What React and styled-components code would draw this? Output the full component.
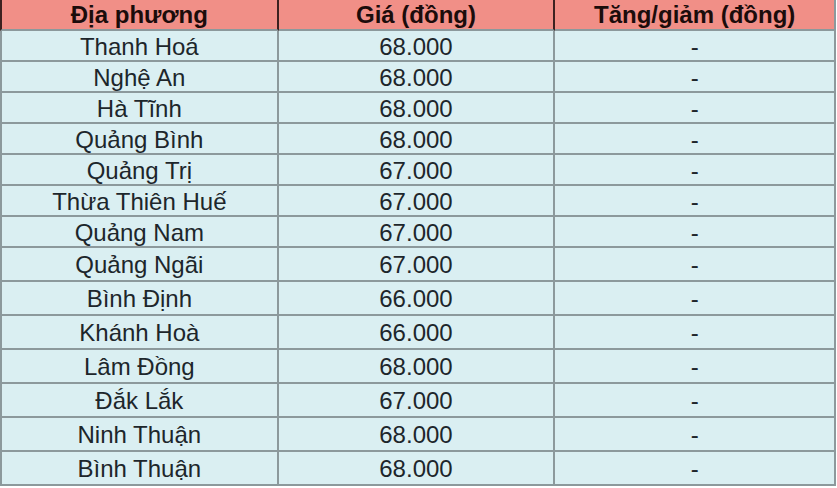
import styled, { createGlobalStyle } from 'styled-components'

const GlobalStyle = createGlobalStyle`
  html, body { margin: 0; padding: 0; background: #ffffff; }
  body { font-family: "Liberation Sans", Arial, sans-serif; }
`

const rows = [
  ['Thanh Hoá', '68.000', '-'],
  ['Nghệ An', '68.000', '-'],
  ['Hà Tĩnh', '68.000', '-'],
  ['Quảng Bình', '68.000', '-'],
  ['Quảng Trị', '67.000', '-'],
  ['Thừa Thiên Huế', '67.000', '-'],
  ['Quảng Nam', '67.000', '-'],
  ['Quảng Ngãi', '67.000', '-'],
  ['Bình Định', '66.000', '-'],
  ['Khánh Hoà', '66.000', '-'],
  ['Lâm Đồng', '68.000', '-'],
  ['Đắk Lắk', '67.000', '-'],
  ['Ninh Thuận', '68.000', '-'],
  ['Bình Thuận', '68.000', '-'],
]

const widths = [276, 274, 278]

export default function App() {
  return (
    <>
      <GlobalStyle />
      <PriceTable>
        <colgroup>
          {widths.map((w, i) => (
            <col key={i} style={{ width: w }} />
          ))}
        </colgroup>
        <thead>
          <tr>
            <HeadCell>Địa phương</HeadCell>
            <HeadCell>Giá (đồng)</HeadCell>
            <HeadCell>Tăng/giảm (đồng)</HeadCell>
          </tr>
        </thead>
        <tbody>
          {rows.map((r, i) => (
            <tr key={i}>
              {r.map((c, j) => (
                <Cell key={j} $tall={i >= 7}>{c}</Cell>
              ))}
            </tr>
          ))}
        </tbody>
      </PriceTable>
    </>
  )
}

const PriceTable = styled.table`
  border-collapse: separate;
  border-spacing: 0;
  table-layout: fixed;
  width: 836px;
  font-size: 24px;
  line-height: 1;
`
const HeadCell = styled.th`
  box-sizing: border-box;
  height: 31px;
  padding: 1px 0 0;
  background: #f18f87;
  color: #1b0c0b;
  font-weight: bold;
  font-size: 24px;
  text-align: center;
  vertical-align: middle;
  border-right: 2px solid #3d2220;
  border-bottom: 2px solid #8c999c;
  &:first-child { border-left: 2px solid #3d2220; }
  &:last-child { border-right-color: #8c999c; }
`
const Cell = styled.td`
  box-sizing: border-box;
  height: ${({ $tall }) => ($tall ? '34px' : '31px')};
  padding: 2px 0 0;
  background: #daeff2;
  color: #1d262b;
  text-align: center;
  vertical-align: middle;
  border-right: 2px solid #8c999c;
  border-bottom: 2px solid #8c999c;
  &:first-child { border-left: 2px solid #8c999c; }
`
